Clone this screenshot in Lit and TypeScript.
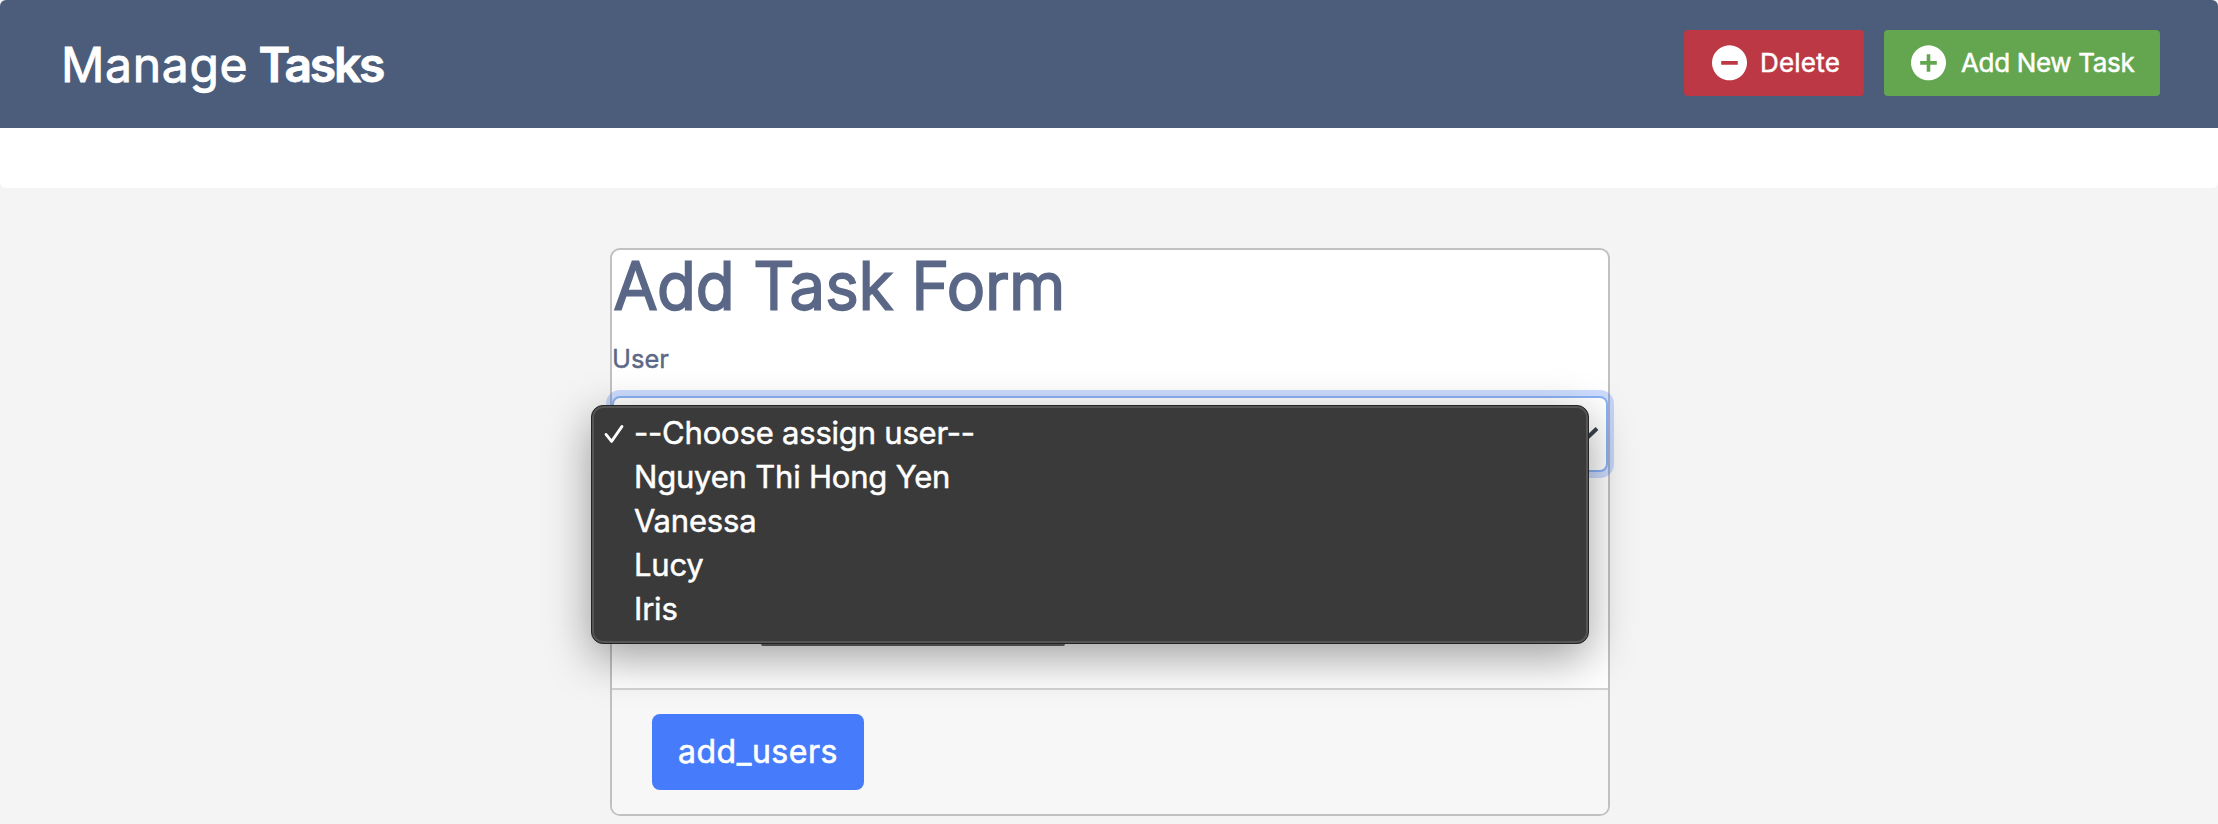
import { LitElement, html, css, svg } from "lit";
import { customElement, property } from "lit/decorators.js";

@customElement("circle-icon")
class CircleIcon extends LitElement {
  @property() kind = "minus";

  static styles = css`
    :host { display: block; width: 35px; height: 36px; }
    svg { display: block; }
  `;

  render() {
    return html`<svg width="35" height="36" viewBox="0 0 35 36" fill="currentColor">
      <path fill-rule="evenodd" d=${this.kind === "plus"
        ? "M17.5 .3a17.5 17.5 0 1 0 .01 0ZM15.7 9.2h3.6v6.9h6.5v3.6h-6.5v7h-3.6v-7H9.2v-3.6h6.5Z"
        : "M17.5 .3a17.5 17.5 0 1 0 .01 0ZM9.2 16.1h16.6v3.6H9.2Z"} />
    </svg>`;
  }
}

@customElement("page-header")
class PageHeader extends LitElement {
  static styles = css`
    :host { display: block; background: #fff; height: 188px; border-radius: 6px; overflow: hidden; }
    .bar {
      box-sizing: border-box; height: 128px; padding: 0 58px 2px 61px; background: #4c5d7b; color: #fff;
      display: flex; align-items: center; justify-content: space-between;
    }
    h2 {
      margin: 0; padding-top: 3px; font-size: 48px; line-height: 60px; font-weight: 400; letter-spacing: .7px;
      white-space: nowrap; -webkit-text-stroke: .9px currentColor; stroke-linejoin: round;
    }
    b { font-weight: 600; letter-spacing: -2.2px; margin-left: -4px; }
    .actions { display: flex; gap: 20px; }
    .btn {
      box-sizing: border-box; height: 66px; border-radius: 4px; padding-left: 28px;
      display: flex; align-items: center; gap: 13px; font-size: 26px; line-height: 66px; white-space: nowrap;
      -webkit-text-stroke: .5px currentColor;
    }
    .delete { width: 180px; background: #bd3845; letter-spacing: .2px; }
    .add { width: 276px; background: #63a64f; padding-left: 27px; gap: 15px; letter-spacing: -.34px; }
  `;

  render() {
    return html`<div class="bar">
      <h2>Manage <b>Tasks</b></h2>
      <div class="actions">
        <div class="btn delete"><circle-icon kind="minus"></circle-icon><span>Delete</span></div>
        <div class="btn add"><circle-icon kind="plus"></circle-icon><span>Add New Task</span></div>
      </div>
    </div>`;
  }
}

@customElement("task-form")
class TaskForm extends LitElement {
  private users = ["--Choose assign user--", "Nguyen Thi Hong Yen", "Vanessa", "Lucy", "Iris"];

  static styles = css`
    :host {
      box-sizing: border-box; display: flex; flex-direction: column; width: 1000px; height: 568px;
      border: 2px solid #c1c1c1; border-radius: 10px; background: #fff; color: #5a6786;
    }
    h1 {
      margin: 0; padding-top: 1px; font-size: 64px; line-height: 69px; font-weight: 300; letter-spacing: .4px;
      padding-left: 2px; -webkit-text-stroke: 2.8px currentColor; stroke-linejoin: round;
    }
    .label { padding-top: 19px; font-size: 25.5px; line-height: 39px; -webkit-text-stroke: .4px currentColor; }
    .field { position: relative; margin: 18px 0 0; }
    .select {
      box-sizing: border-box; height: 76px; border: 2px solid #8ab1f6; border-radius: 8px; background: #fff;
      box-shadow: 0 0 0 6px rgba(70, 125, 250, .27); display: flex; justify-content: flex-end; align-items: center;
      padding-right: 7px; color: #3b4149;
    }
    .menu {
      position: absolute; left: -21px; top: 9px; box-sizing: border-box; width: 998px; height: 239px;
      border: 1px solid #242424; border-radius: 12px; background: #3a3a3a; color: #fff;
      box-shadow: inset 0 0 0 2px #555, 0 14px 46px rgba(0, 0, 0, .38); padding: 5px 0 0 10px;
    }
    .option {
      display: flex; align-items: center; height: 44px; font-size: 31px; line-height: 44px;
      letter-spacing: -.2px; white-space: nowrap; -webkit-text-stroke: .5px currentColor;
    }
    .tick { width: 32px; height: 44px; flex: none; }
    .date { margin: 133px 0 0 149px; box-sizing: border-box; width: 304px; height: 41px; border: 2px solid #666; border-radius: 2px; }
    .footer {
      margin-top: auto; box-sizing: border-box; height: 126px; border-top: 2px solid #d3d3d3; background: #f7f7f7;
      border-radius: 0 0 8px 8px; padding: 24px 0 0 40px;
    }
    .submit {
      width: 212px; height: 76px; border-radius: 8px; background: #467bfb; color: #fff; text-align: center;
      font-size: 32px; line-height: 75px; letter-spacing: .55px; -webkit-text-stroke: .6px currentColor;
    }
  `;

  render() {
    return html`
      <h1>Add Task Form</h1>
      <div class="label">User</div>
      <div class="field">
        <div class="select">
          <svg width="24" height="24" viewBox="0 0 24 24" fill="none" stroke="currentColor" stroke-width="4">
            <path d="M2 6.5 12 16 22 6.5" />
          </svg>
        </div>
        <div class="menu">
          ${this.users.map((name, i) => html`<div class="option">
            <svg class="tick" viewBox="0 0 32 44" fill="none" stroke="currentColor" stroke-width="2.8" stroke-linecap="round" stroke-linejoin="round">
              ${i === 0 ? svg`<path d="M4 23.4 9.6 30.4 20 15.4" />` : ""}
            </svg><span>${name}</span>
          </div>`)}
        </div>
      </div>
      <div class="date"></div>
      <div class="footer"><div class="submit">add_users</div></div>
    `;
  }
}

@customElement("app-root")
class AppRoot extends LitElement {
  static styles = css`
    :host {
      display: flex; flex-direction: column; height: 824px; overflow: hidden; background: #f4f4f4;
      font-family: Inter, "Liberation Sans", sans-serif;
    }
    page-header { flex: none; }
    task-form { margin: 60px 0 0 610px; flex: none; }
  `;

  render() {
    return html`<page-header></page-header><task-form></task-form>`;
  }
}
